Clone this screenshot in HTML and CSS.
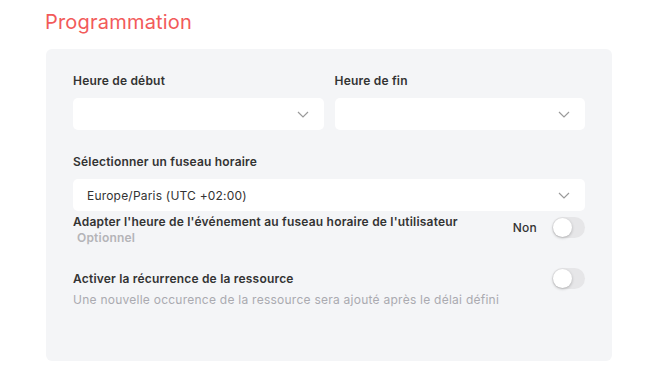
FILE: index.html
```html
<!DOCTYPE html>
<html lang="fr">
<head>
    <meta charset="UTF-8">
    <meta name="viewport" content="width=device-width, initial-scale=1.0">
    <title>Programmation</title>
    <link rel="stylesheet" href="styles.css">
</head>
<body>
    <section class="schedule">
        <h2 class="schedule-title">Programmation</h2>
        <div class="card">
            <div class="row-2">
                <div class="field">
                    <label class="field-label">Heure de début</label>
                    <div class="select">
                        <span class="select-value"></span>
                        <svg class="chevron" width="12" height="7" viewBox="0 0 12 7"><path d="M1 1l5 5 5-5" fill="none" stroke="#9a9a9a" stroke-width="1.2"/></svg>
                    </div>
                </div>
                <div class="field">
                    <label class="field-label">Heure de fin</label>
                    <div class="select">
                        <span class="select-value"></span>
                        <svg class="chevron" width="12" height="7" viewBox="0 0 12 7"><path d="M1 1l5 5 5-5" fill="none" stroke="#9a9a9a" stroke-width="1.2"/></svg>
                    </div>
                </div>
            </div>

            <div class="field tz">
                <label class="field-label">Sélectionner un fuseau horaire</label>
                <div class="select">
                    <span class="select-value">Europe/Paris (UTC +02:00)</span>
                    <svg class="chevron" width="12" height="7" viewBox="0 0 12 7"><path d="M1 1l5 5 5-5" fill="none" stroke="#9a9a9a" stroke-width="1.2"/></svg>
                </div>
            </div>

            <div class="option adapt">
                <div class="option-text">
                    <div class="option-title">Adapter l'heure de l'événement au fuseau horaire de l'utilisateur</div>
                    <div class="option-hint">Optionnel</div>
                </div>
                <div class="option-control">
                    <span class="toggle-label">Non</span>
                    <span class="toggle"><span class="knob"></span></span>
                </div>
            </div>

            <div class="option recur">
                <div class="option-text">
                    <div class="option-title">Activer la récurrence de la ressource</div>
                    <div class="option-desc">Une nouvelle occurence de la ressource sera ajouté après le délai défini</div>
                </div>
                <div class="option-control">
                    <span class="toggle"><span class="knob"></span></span>
                </div>
            </div>
        </div>
    </section>
</body>
</html>
```

FILE: styles.css
```css
body {
    margin: 0;
    background-color: #fff;
    font-family: "Inter", "Noto Sans", sans-serif;
    color: #333;
}

.schedule {
    padding: 9px 58px 0 46px;
}

.schedule-title {
    margin: 0 0 13px -1px;
    font-size: 20px;
    font-weight: 400;
    line-height: 27px;
    color: #f25a5a;
    letter-spacing: 0.2px;
}

.card {
    background-color: #f4f5f7;
    border-radius: 6px;
    padding: 24px 27px 0 27px;
    height: 288px;
}

.row-2 {
    display: flex;
    gap: 11px;
}

.row-2 .field {
    flex: 1;
}

.field-label {
    display: block;
    font-size: 12px;
    font-weight: 600;
    line-height: 16px;
    margin-bottom: 9px;
    color: #333;
    letter-spacing: 0.2px;
}

.select {
    display: flex;
    align-items: center;
    justify-content: space-between;
    background-color: #fff;
    border-radius: 5px;
    height: 32px;
    padding: 0 15px 0 14px;
}

.select-value {
    font-size: 12px;
    color: #333;
    letter-spacing: 0.2px;
}

.chevron {
    flex-shrink: 0;
}

.tz {
    margin-top: 24px;
}

.option {
    display: flex;
    justify-content: space-between;
    align-items: flex-start;
}

.adapt {
    margin-top: 2px;
}

.recur {
    margin-top: 25px;
}

.option-title {
    font-size: 12px;
    font-weight: 600;
    line-height: 18px;
    color: #333;
    letter-spacing: 0.2px;
}

.option-hint {
    font-size: 12px;
    font-weight: 600;
    color: #b4b4b8;
    margin-left: 4px;
    line-height: 14px;
    letter-spacing: 0.2px;
}

.option-desc {
    font-size: 12px;
    color: #aaaab0;
    margin-top: 4px;
    line-height: 16px;
    letter-spacing: 0.25px;
}

.option-control {
    display: flex;
    align-items: center;
    gap: 15px;
}

.adapt .option-control {
    margin-top: 4px;
}

.recur .option-control {
    margin-top: -2px;
}

.toggle-label {
    font-size: 12px;
    font-weight: 500;
    color: #333;
    letter-spacing: 0.2px;
}

.toggle {
    position: relative;
    display: inline-block;
    width: 33px;
    height: 21px;
    border-radius: 11px;
    background-color: #e6e6e8;
}

.knob {
    position: absolute;
    top: 1px;
    left: 1px;
    width: 19px;
    height: 19px;
    border-radius: 50%;
    background-color: #fff;
    box-shadow: 0 1px 3px rgba(0, 0, 0, 0.25);
}
```
